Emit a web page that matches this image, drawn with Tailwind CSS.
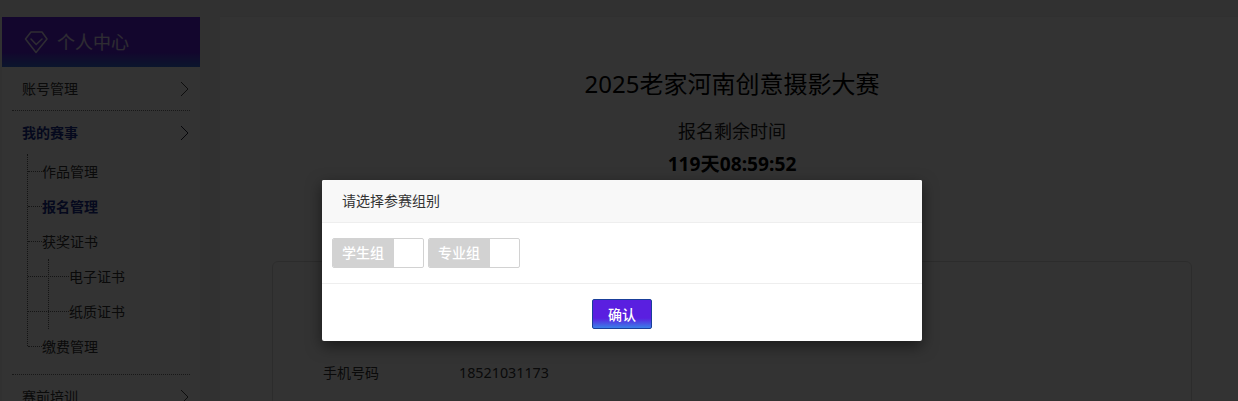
<!DOCTYPE html>
<html lang="zh">
<head>
<meta charset="utf-8">
<script src="https://cdn.jsdelivr.net/npm/@tailwindcss/browser@4"></script>
</head>
<body class="h-[401px] overflow-hidden bg-[#f2f2f2] font-['Noto_Sans','Noto_Sans_CJK_SC',sans-serif] text-[14px] text-[#333]">
<div class="relative h-[401px] overflow-hidden">
  <div class="flex items-start pt-[17px] pl-[2px]">
    <aside class="w-[198px] shrink-0 bg-white h-[384px]">
      <div class="flex h-[50px] items-center gap-[9px] pl-[22px] bg-[linear-gradient(#5f1fe0_0,#5f1fe0_70%,#3a6fe0_100%)] text-white/85">
        <svg width="24" height="24" viewBox="0 0 24 24" fill="none" stroke="currentColor" stroke-width="1.5"><path d="M7 2h11l5 7-11 13.5L1.5 9z" stroke-linejoin="round"/><path d="M7 9l5.2 5.5L18 9" stroke-linecap="round"/></svg>
        <span class="text-[18px] leading-none">个人中心</span>
      </div>
      <div class="px-[10px]">
        <div class="flex h-[44px] items-center justify-between pl-[10px] pr-[1px] border-b border-dotted border-[#777]">
          <span>账号管理</span>
          <svg width="9" height="16" viewBox="0 0 9 16" fill="none" stroke="#444" stroke-width="1"><path d="M1 1l7 7-7 7"/></svg>
        </div>
        <div class="flex h-[43px] items-center justify-between pl-[10px] pr-[1px]">
          <span class="font-bold text-[#1a2f8f]">我的赛事</span>
          <svg class="mt-[1px]" width="9" height="16" viewBox="0 0 9 16" fill="none" stroke="#223" stroke-width="1"><path d="M1 1l7 7-7 7"/></svg>
        </div>
        <ul class="relative ml-[15px] h-[192px] border-l border-dotted border-[#666]">
          <li class="flex h-[35px] items-center"><span class="w-[14px] border-t border-dotted border-[#666]"></span><span>作品管理</span></li>
          <li class="flex h-[35px] items-center"><span class="w-[14px] border-t border-dotted border-[#666]"></span><span class="font-bold text-[#1a2f8f]">报名管理</span></li>
          <li class="flex h-[35px] items-center"><span class="w-[14px] border-t border-dotted border-[#666]"></span><span>获奖证书</span></li>
          <li class="flex h-[35px] items-center"><span class="w-[41px] border-t border-dotted border-[#666]"></span><span>电子证书</span></li>
          <li class="flex h-[35px] items-center"><span class="w-[41px] border-t border-dotted border-[#666]"></span><span>纸质证书</span></li>
          <li class="flex h-[35px] items-center"><span class="w-[14px] border-t border-dotted border-[#666]"></span><span>缴费管理</span></li>
          <span class="absolute left-[20px] top-[105px] h-[70px] border-l border-dotted border-[#666]"></span>
        </ul>
        <div class="mt-[28px] border-t border-dotted border-[#777] flex h-[44px] items-center justify-between pl-[10px] pr-[1px]">
          <span>赛前培训</span>
          <svg width="9" height="16" viewBox="0 0 9 16" fill="none" stroke="#444" stroke-width="1"><path d="M1 1l7 7-7 7"/></svg>
        </div>
      </div>
    </aside>
    <main class="ml-[20px] flex-1 bg-white h-[384px] pl-[52px] border-t border-[#eee] -mt-px">
      <div class="w-[920px] text-center text-black">
        <h1 class="pt-[49px] text-[24px] leading-[36px]">2025老家河南创意摄影大赛</h1>
        <p class="mt-[16px] text-[18px] leading-[27px] text-[#222]">报名剩余时间</p>
        <p class="mt-[5px] text-[19.2px] leading-[27px] font-bold">119天08:59:52</p>
      </div>
      <div class="mt-[84px] h-[200px] w-[920px] rounded-[6px] border border-[#ddd] pl-[50px] pt-[100px]">
        <div class="flex leading-[22px]"><span class="w-[136px]">手机号码</span><span class="text-[14.3px]">18521031173</span></div>
      </div>
    </main>
  </div>

  <div class="absolute inset-0 bg-black/80"></div>

  <div class="absolute left-[322px] top-[180px] w-[600px] h-[161px] overflow-hidden rounded-[2px] bg-white shadow-[0_5px_15px_rgba(0,0,0,0.5)] flex flex-col">
    <div class="flex h-[43px] items-center border-b border-[#eee] bg-[#f8f8f8] pl-[20px] pb-[2px] text-[#333]">请选择参赛组别</div>
    <div class="flex h-[61px] gap-[4px] border-b border-[#eee] px-[10px] pt-[15px]">
      <div class="flex h-[30px] w-[92px] rounded-[2px] border border-[#d2d2d2] overflow-hidden"><span class="flex w-[61px] items-center pl-[9px] pb-[1px] bg-[#d2d2d2] text-white font-medium">学生组</span></div>
      <div class="flex h-[30px] w-[92px] rounded-[2px] border border-[#d2d2d2] overflow-hidden"><span class="flex w-[61px] items-center pl-[9px] pb-[1px] bg-[#d2d2d2] text-white font-medium">专业组</span></div>
    </div>
    <div class="flex flex-1 justify-center pt-[15px]">
      <button class="h-[30px] w-[60px] rounded-[2px] border border-[#1a3f9a] bg-[linear-gradient(#5a1fe0_0,#5a1fe0_65%,#3a80e8_100%)] text-[14px] text-white font-medium">确认</button>
    </div>
  </div>
</div>
</body>
</html>
